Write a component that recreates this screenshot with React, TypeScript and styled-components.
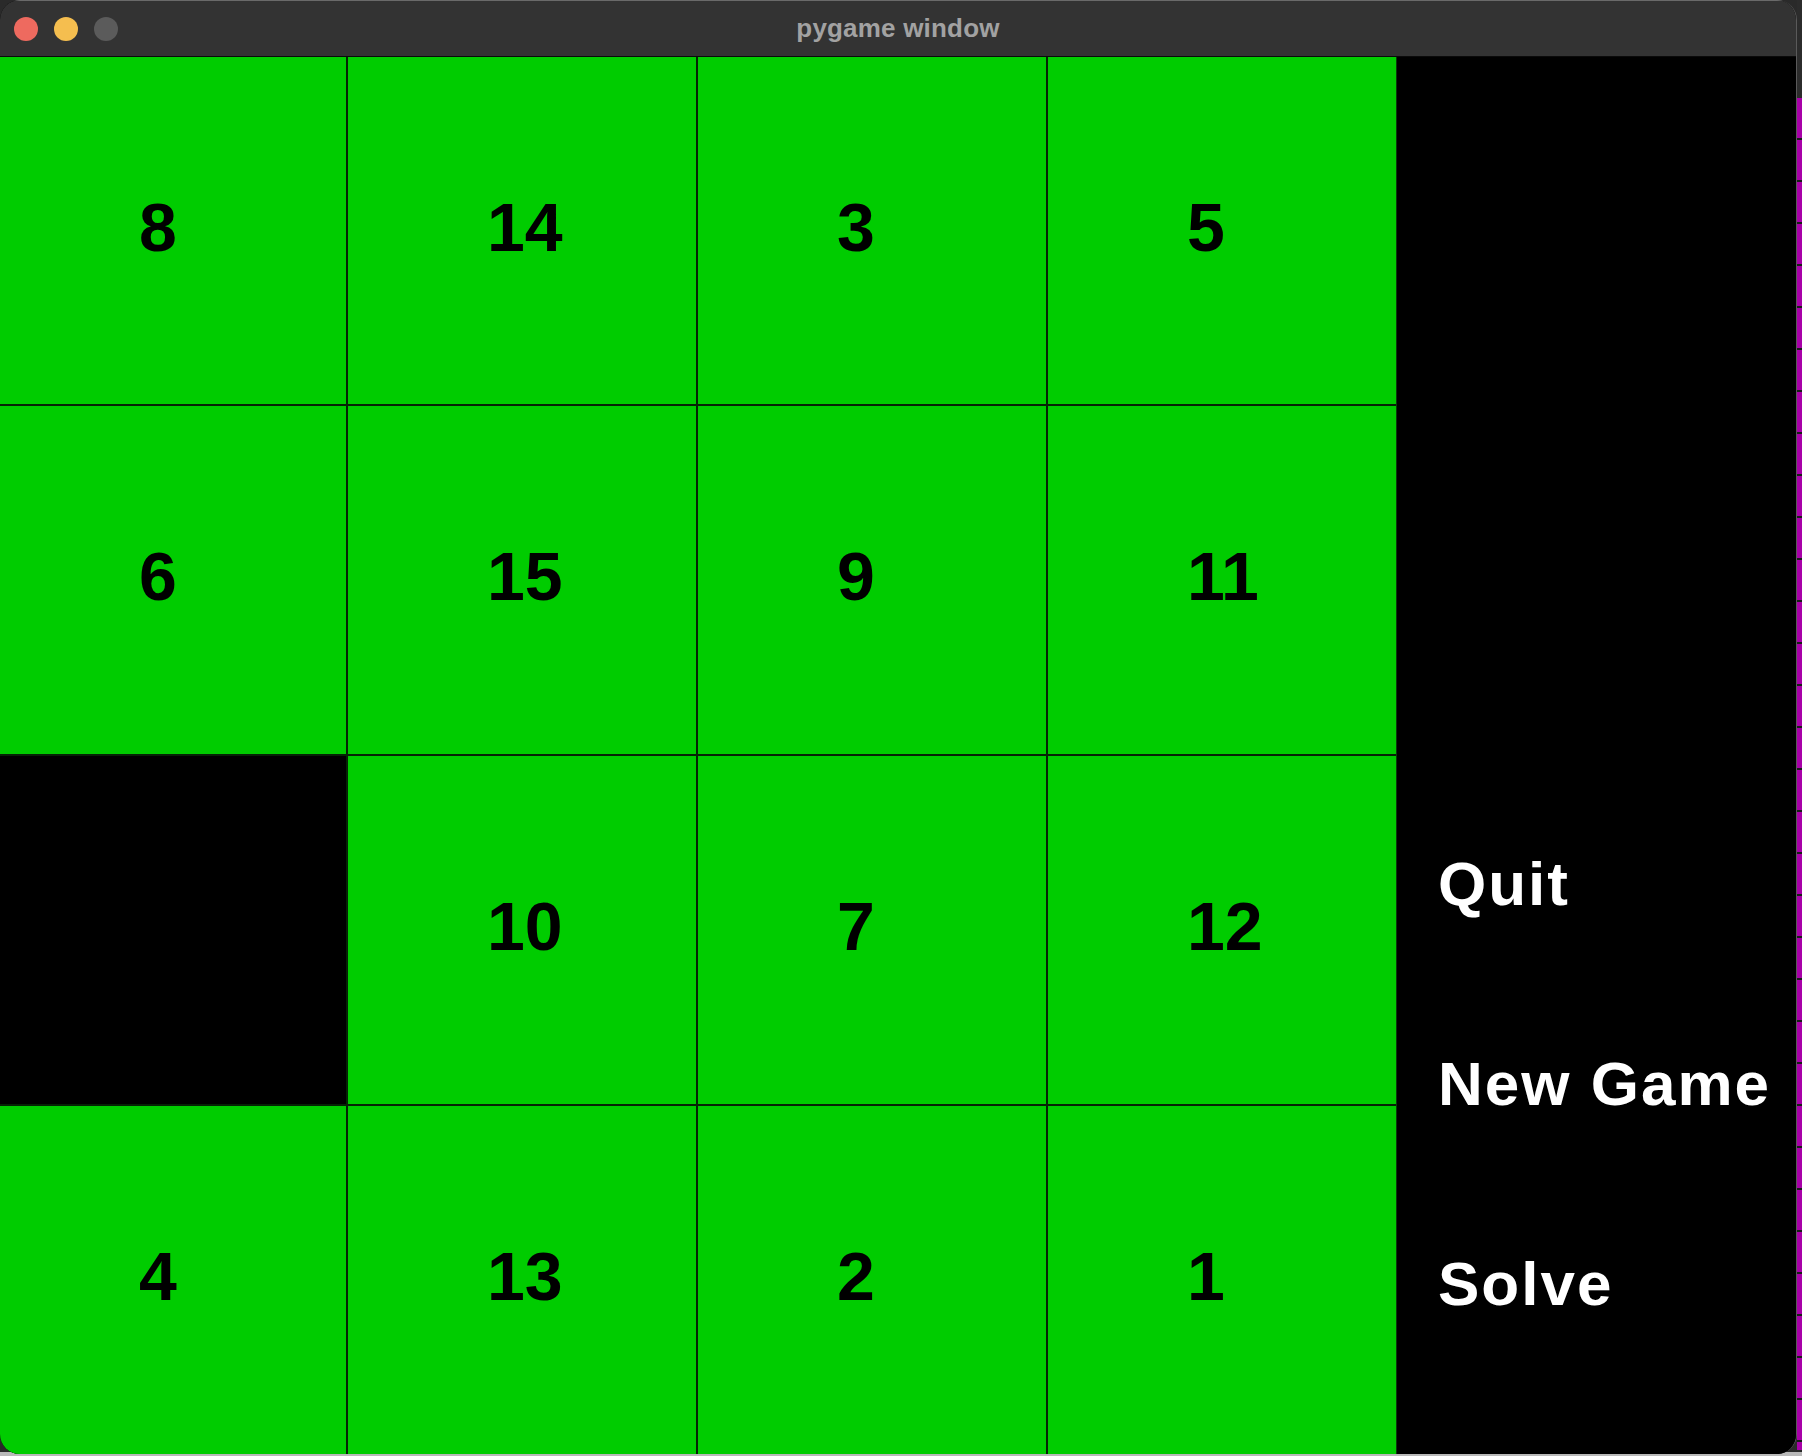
import React from "react";
import styled, { createGlobalStyle } from "styled-components";

const GlobalStyle = createGlobalStyle`
  html, body {
    margin: 0;
    padding: 0;
    background: #2a2a2a;
    width: 1802px;
    height: 1456px;
    overflow: hidden;
  }
  * { box-sizing: border-box; }
`;

const Desktop = styled.div`
  display: flex;
  width: 1802px;
  height: 1456px;
  background: linear-gradient(#2a2a2a 0, #2a2a2a 1452px, #b9b9b9 1452px);
`;

const Window = styled.div`
  width: 1797px;
  height: 1454px;
  border-radius: 20px;
  overflow: hidden;
  background: #000;
  border-right: 1px solid #5a5a5a;
  display: flex;
  flex-direction: column;
  flex-shrink: 0;
`;

const EdgeStrip = styled.div`
  flex: 1;
  display: flex;
  flex-direction: column;
`;

const EdgeTop = styled.div`
  height: 98px;
  background: #2c2c2c;
`;

const EdgeMagenta = styled.div`
  flex: 1;
  background: repeating-linear-gradient(
    #a800a8 0,
    #a800a8 40px,
    #1a1a1a 40px,
    #1a1a1a 42px
  );
  margin-bottom: 6px;
`;

const TitleBar = styled.div`
  height: 57px;
  flex-shrink: 0;
  background: #333333;
  border-top: 1px solid #6a6a6a;
  border-bottom: 1px solid #0a0a0a;
  display: grid;
  grid-template-columns: 1fr auto 1fr;
  align-items: center;
`;

const Lights = styled.div`
  display: flex;
  gap: 16px;
  padding-left: 14px;
`;

const Light = styled.span<{ $color: string }>`
  width: 24px;
  height: 24px;
  border-radius: 50%;
  background: ${(p) => p.$color};
`;

const Title = styled.div`
  font-family: "Liberation Sans", Arial, sans-serif;
  font-weight: 700;
  font-size: 26px;
  color: #a2a2a2;
  letter-spacing: 0.2px;
`;

const Content = styled.div`
  flex: 1;
  display: flex;
  min-height: 0;
`;

const Board = styled.div`
  width: 1397px;
  flex-shrink: 0;
  display: grid;
  grid-template-columns: 346px 348px 348px 348px;
  grid-template-rows: 347px 348px 348px 1fr;
  gap: 2px;
  background: #062206;
  border-right: 1px solid #0a3a0a;
`;

const Tile = styled.div<{ $empty?: boolean }>`
  background: ${(p) => (p.$empty ? "#000" : "#00cc00")};
  display: flex;
  align-items: center;
  padding-left: 139px;
  padding-bottom: 8px;
  font-family: "Liberation Sans", Arial, sans-serif;
  font-weight: 700;
  font-size: 68px;
  line-height: 1;
  color: #000;
`;

const Panel = styled.div`
  flex: 1;
  background: #000;
  display: flex;
  flex-direction: column;
  justify-content: flex-end;
  gap: 138px;
  padding-left: 41px;
  padding-bottom: 139px;
`;

const MenuItem = styled.div`
  font-family: "Liberation Sans", Arial, sans-serif;
  font-weight: 700;
  font-size: 62px;
  line-height: 62px;
  letter-spacing: 2px;
  color: #ffffff;
`;

const tiles: (number | null)[] = [
  8, 14, 3, 5,
  6, 15, 9, 11,
  null, 10, 7, 12,
  4, 13, 2, 1,
];

export default function App() {
  return (
    <>
      <GlobalStyle />
      <Desktop>
        <Window>
          <TitleBar>
            <Lights>
              <Light $color="#ee6a5f" />
              <Light $color="#f5be4f" />
              <Light $color="#5b5b5b" />
            </Lights>
            <Title>pygame window</Title>
            <div />
          </TitleBar>
          <Content>
            <Board>
              {tiles.map((t, i) => (
                <Tile key={i} $empty={t === null}>
                  {t ?? ""}
                </Tile>
              ))}
            </Board>
            <Panel>
              <MenuItem>Quit</MenuItem>
              <MenuItem>New Game</MenuItem>
              <MenuItem>Solve</MenuItem>
            </Panel>
          </Content>
        </Window>
        <EdgeStrip>
          <EdgeTop />
          <EdgeMagenta />
        </EdgeStrip>
      </Desktop>
    </>
  );
}
